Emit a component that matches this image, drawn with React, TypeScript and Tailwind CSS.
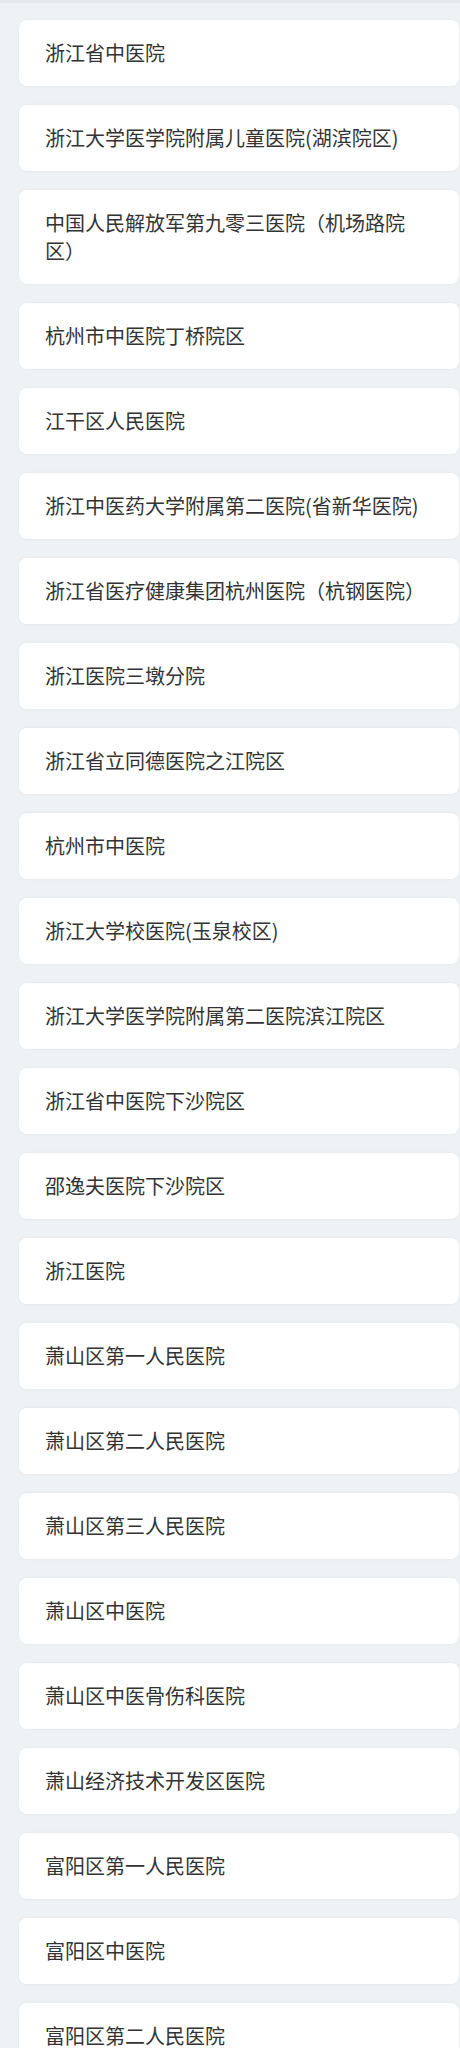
const hospitals = [
  "浙江省中医院",
  "浙江大学医学院附属儿童医院(湖滨院区)",
  "中国人民解放军第九零三医院（机场路院区）",
  "杭州市中医院丁桥院区",
  "江干区人民医院",
  "浙江中医药大学附属第二医院(省新华医院)",
  "浙江省医疗健康集团杭州医院（杭钢医院）",
  "浙江医院三墩分院",
  "浙江省立同德医院之江院区",
  "杭州市中医院",
  "浙江大学校医院(玉泉校区)",
  "浙江大学医学院附属第二医院滨江院区",
  "浙江省中医院下沙院区",
  "邵逸夫医院下沙院区",
  "浙江医院",
  "萧山区第一人民医院",
  "萧山区第二人民医院",
  "萧山区第三人民医院",
  "萧山区中医院",
  "萧山区中医骨伤科医院",
  "萧山经济技术开发区医院",
  "富阳区第一人民医院",
  "富阳区中医院",
  "富阳区第二人民医院",
  "富阳区第三人民医院",
];

export default function App() {
  return (
    <div
      className="min-h-screen bg-[#eef2f5]"
      style={{ fontFamily: '"Noto Sans CJK SC", "Noto Sans", sans-serif' }}
    >
      <div className="h-[3px] bg-[#e4e9ed]" />
      {/* 医院列表 */}
      <div className="flex flex-col gap-[19px] pt-[17px] pb-5 pl-[19px] pr-[1px]">
        {hospitals.map((name) => (
          <div
            key={name}
            className="rounded-lg bg-white px-[26px] py-[19px] text-[20px] leading-[28px] text-[#333] shadow-[0_0_3px_rgba(0,0,0,0.06)]"
          >
            {name}
          </div>
        ))}
      </div>
    </div>
  );
}
